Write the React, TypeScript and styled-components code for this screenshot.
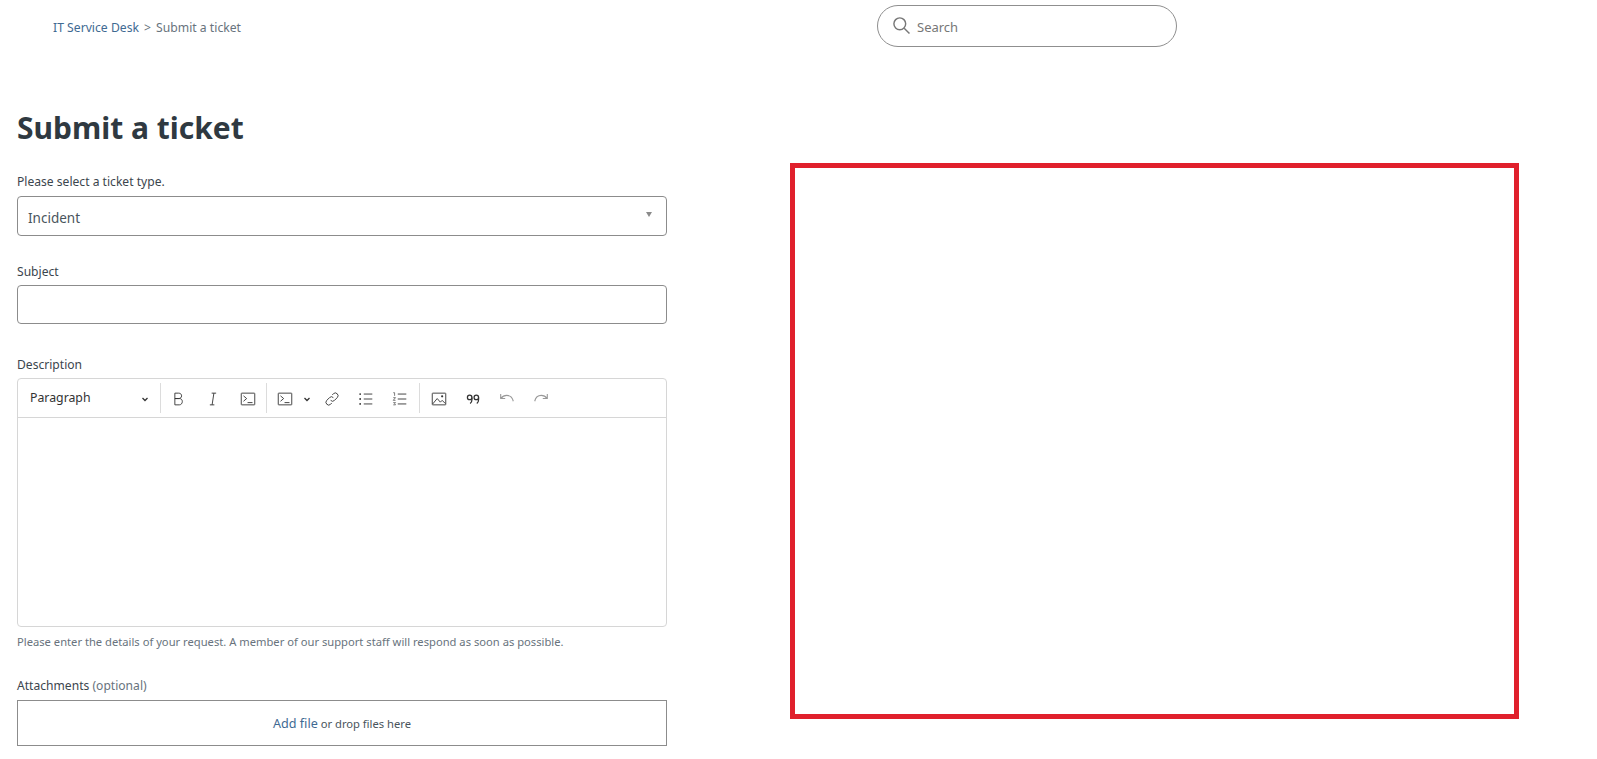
import React from 'react'
import styled, { createGlobalStyle } from 'styled-components'

const GlobalStyle = createGlobalStyle`
  html, body {
    margin: 0;
    padding: 0;
    background: #fff;
    overflow: hidden;
  }
  body {
    font-family: "Noto Sans", "Open Sans", sans-serif;
    color: #2f3941;
  }
`

const Icon = ({ children, faded }: { children: React.ReactNode; faded?: boolean }) => (
  <ToolIcon viewBox="0 0 20 20" $faded={faded}>
    {children}
  </ToolIcon>
)

const CodeBlockGlyph = () => (
  <>
    <rect x="2.5" y="3.5" width="15" height="13" rx="0.5" />
    <path d="M5 6.500 8.500 9.500 5 12.500M9.500 14H15" />
  </>
)

export default function App() {
  return (
    <Page>
      <GlobalStyle />
      <Header>
        <Breadcrumbs>
          <CrumbLink>IT Service Desk</CrumbLink>
          <CrumbSep>&gt;</CrumbSep>
          <span>Submit a ticket</span>
        </Breadcrumbs>
        <SearchBox>
          <SearchIcon viewBox="0 0 20 20">
            <circle cx="8.2" cy="8.2" r="6.2" />
            <path d="M12.8 12.8 18.4 18.4" />
          </SearchIcon>
          <SearchText>Search</SearchText>
        </SearchBox>
      </Header>
      <Main>
        <Form>
          <Title>Submit a ticket</Title>
          <Label>Please select a ticket type.</Label>
          <Select>
            <SelectValue>Incident</SelectValue>
            <Caret />
          </Select>
          <Label $top={27} $bottom={4}>Subject</Label>
          <TextInput />
          <Label $top={32} $bottom={4}>Description</Label>
          <Editor>
            <Toolbar>
              <Dropdown>
                <DropdownLabel>Paragraph</DropdownLabel>
                <Chevron viewBox="0 0 10 10">
                  <path d="M2.5 4 5 6.500 7.500 4" />
                </Chevron>
              </Dropdown>
              <Divider />
              <ToolGroup>
                <ToolButton $wide>
                  <Icon>
                    <path d="M6.500 3.500h4.200c2 0 3.300 1.200 3.300 3s-1.300 3-3.300 3H6.500zM6.500 9.500h5c2 0 3.300 1.300 3.300 3.300s-1.300 3.700-3.300 3.700h-5z" />
                  </Icon>
                </ToolButton>
                <ToolButton $wide>
                  <Icon>
                    <path d="M8.500 3.500h5M6.500 16.500h5M11 3.500 9 16.500" />
                  </Icon>
                </ToolButton>
                <ToolButton $wide>
                  <Icon>
                    <CodeBlockGlyph />
                  </Icon>
                </ToolButton>
              </ToolGroup>
              <Divider />
              <ToolGroup $end={2}>
                <SplitButton>
                  <Icon>
                    <CodeBlockGlyph />
                  </Icon>
                  <Chevron viewBox="0 0 10 10">
                    <path d="M2.500 4 5 6.500 7.500 4" />
                  </Chevron>
                </SplitButton>
                <ToolButton>
                  <Icon>
                    <path d="M8.500 11.500a3 3 0 0 0 4.300 0l3-3a3 3 0 0 0-4.300-4.300l-1.200 1.200M11.500 8.500a3 3 0 0 0-4.300 0l-3 3a3 3 0 0 0 4.300 4.300l1.200-1.200" />
                  </Icon>
                </ToolButton>
                <ToolButton>
                  <Icon>
                    <path d="M7.500 4.500h9.500M7.500 10h9.500M7.500 15.500h9.500" />
                    <path className="dots" d="M3.500 4.500h.01M3.500 10h.01M3.500 15.500h.01" />
                  </Icon>
                </ToolButton>
                <ToolButton>
                  <Icon>
                    <path d="M7.500 4.500h9.500M7.500 10h9.500M7.500 15.500h9.500" />
                    <path d="M2.500 3h1.500v3.500M2.500 8.500h2.500L2.500 11.500h2.500M2.500 14h2.500l-1 1.200 1 1.300h-2.500" strokeWidth="0.700" />
                  </Icon>
                </ToolButton>
              </ToolGroup>
              <Divider />
              <ToolGroup $start={2}>
                <ToolButton>
                  <Icon>
                    <rect x="2.500" y="3.500" width="15" height="13" rx="0.500" />
                    <path d="M3 15.500 8 9.500 11.500 13.500 13.500 11.500 17 15" />
                    <circle cx="13.500" cy="7" r="1.200" fill="#333" stroke="none" />
                  </Icon>
                </ToolButton>
                <ToolButton>
                  <Icon>
                    <g className="quote">
                      <circle cx="6.300" cy="8.200" r="2.500" />
                      <circle cx="13.700" cy="8.200" r="2.500" />
                      <path d="M8.800 8.200v2.500c0 1.800-.6 3.200-2 4.300M16.200 8.200v2.500c0 1.800-.6 3.200-2 4.300" />
                    </g>
                  </Icon>
                </ToolButton>
                <ToolButton>
                  <Icon faded>
                    <path d="M3 4.500v5h5M3.300 9.300C5 7 7.500 6 9.700 6c3.500 0 6.300 2.300 7.300 6.500" />
                  </Icon>
                </ToolButton>
                <ToolButton>
                  <Icon faded>
                    <path d="M17 4.500v5h-5M16.700 9.300C15 7 12.500 6 10.300 6 6.800 6 4 8.300 3 12.500" />
                  </Icon>
                </ToolButton>
              </ToolGroup>
            </Toolbar>
            <EditArea />
          </Editor>
          <Hint>Please enter the details of your request. A member of our support staff will respond as soon as possible.</Hint>
          <Label $top={27}>
            Attachments <Optional>(optional)</Optional>
          </Label>
          <DropZone>
            <AddFile>Add file</AddFile> or drop files here
          </DropZone>
        </Form>
        <RedactedBox />
      </Main>
    </Page>
  )
}

const Page = styled.div`
  width: 1597px;
  height: 759px;
  overflow: hidden;
  background: #fff;
`
const Header = styled.header`
  display: flex;
  height: 47px;
  padding: 5px 0 0 53px;
  box-sizing: border-box;
`
const Breadcrumbs = styled.nav`
  display: flex;
  align-items: center;
  width: 824px;
  height: 44px;
  font-size: 12.2px;
  color: #68737d;
`
const CrumbLink = styled.a`
  color: #3f6a92;
`
const CrumbSep = styled.span`
  margin: 0 5px;
`
const SearchBox = styled.div`
  display: flex;
  align-items: center;
  width: 300px;
  height: 42px;
  box-sizing: border-box;
  padding-left: 14px;
  border: 1px solid #8f8f8f;
  border-radius: 21px;
`
const SearchIcon = styled.svg`
  width: 19px;
  height: 19px;
  margin-top: -2px;
  fill: none;
  stroke: #777;
  stroke-width: 1.5;
`
const SearchText = styled.span`
  margin: 1px 0 0 6px;
  font-size: 13px;
  color: #777;
`
const Main = styled.main`
  display: flex;
  align-items: flex-start;
  padding-left: 17px;
`
const Form = styled.div`
  width: 650px;
  flex: none;
`
const Title = styled.h1`
  margin: 59px 0 23px;
  font-size: 30px;
  line-height: 44px;
  font-weight: 700;
  color: #2f3941;
`
const Label = styled.label<{ $top?: number; $bottom?: number }>`
  display: block;
  margin-top: ${(p) => p.$top ?? 0}px;
  margin-bottom: ${(p) => p.$bottom ?? 5}px;
  font-size: 12.1px;
  line-height: 18px;
  color: #3b454d;
`
const Select = styled.div`
  position: relative;
  display: flex;
  align-items: center;
  height: 40px;
  box-sizing: border-box;
  padding-left: 10px;
  border: 1px solid #8c8c8c;
  border-radius: 4px;
  font-size: 13.5px;
  color: #49545c;
`
const SelectValue = styled.span`
  margin-top: 3px;
`
const Caret = styled.span`
  position: absolute;
  right: 14px;
  top: 15px;
  border-left: 3px solid transparent;
  border-right: 3px solid transparent;
  border-top: 5px solid #8a8a8a;
`
const TextInput = styled.div`
  height: 39px;
  box-sizing: border-box;
  border: 1px solid #8c8c8c;
  border-radius: 4px;
`
const Editor = styled.div`
  margin-top: 1px;
  border: 1px solid #d6d6d6;
  border-radius: 4px;
`
const Toolbar = styled.div`
  display: flex;
  align-items: center;
  height: 38px;
  border-bottom: 1px solid #d6d6d6;
`
const Dropdown = styled.div`
  display: flex;
  align-items: center;
  justify-content: space-between;
  width: 142px;
  box-sizing: border-box;
  padding: 0 10px 0 12px;
  font-size: 12.3px;
  color: #333;
`
const DropdownLabel = styled.span`
  margin-top: -2px;
`
const Chevron = styled.svg`
  width: 10px;
  height: 10px;
  margin-top: 2px;
  fill: none;
  stroke: #333;
  stroke-width: 1.300;
`
const Divider = styled.span`
  flex: none;
  width: 1px;
  height: 30px;
  background: #dcdcdc;
`
const ToolGroup = styled.div<{ $start?: number; $end?: number }>`
  display: flex;
  align-items: center;
  padding-left: ${(p) => p.$start ?? 0}px;
  padding-right: ${(p) => p.$end ?? 0}px;
`
const ToolButton = styled.span<{ $wide?: boolean }>`
  display: flex;
  align-items: center;
  justify-content: center;
  box-sizing: border-box;
  width: ${(p) => (p.$wide ? 35 : 34)}px;
  padding-right: ${(p) => (p.$wide ? 2 : 0)}px;
`
const SplitButton = styled.span`
  display: flex;
  align-items: center;
  gap: 8px;
  width: 48px;
  padding-left: 9px;
  box-sizing: border-box;
`
const ToolIcon = styled.svg<{ $faded?: boolean }>`
  flex: none;
  width: 18px;
  height: 18px;
  margin-top: 2px;
  fill: none;
  stroke: ${(p) => (p.$faded ? '#999' : '#333')};
  stroke-width: ${(p) => (p.$faded ? 1.2 : 1)};
  .dots {
    stroke-width: 2;
    stroke-linecap: round;
  }
  .quote {
    stroke-width: 1.4;
  }
`
const EditArea = styled.div`
  height: 208px;
`
const Hint = styled.p`
  margin: 7px 0 0;
  font-size: 11.2px;
  line-height: 16px;
  color: #68737d;
`
const Optional = styled.span`
  color: #68737d;
`
const DropZone = styled.div`
  display: flex;
  align-items: center;
  justify-content: center;
  gap: 3px;
  height: 46px;
  box-sizing: border-box;
  border: 1px solid #8c8c8c;
  font-size: 11.2px;
  color: #49545c;
`
const AddFile = styled.a`
  font-size: 12.6px;
  color: #3f6a92;
`
const RedactedBox = styled.div`
  flex: none;
  width: 729px;
  height: 556px;
  box-sizing: border-box;
  margin: 116px 0 0 123px;
  border: 5px solid #e0202c;
`
